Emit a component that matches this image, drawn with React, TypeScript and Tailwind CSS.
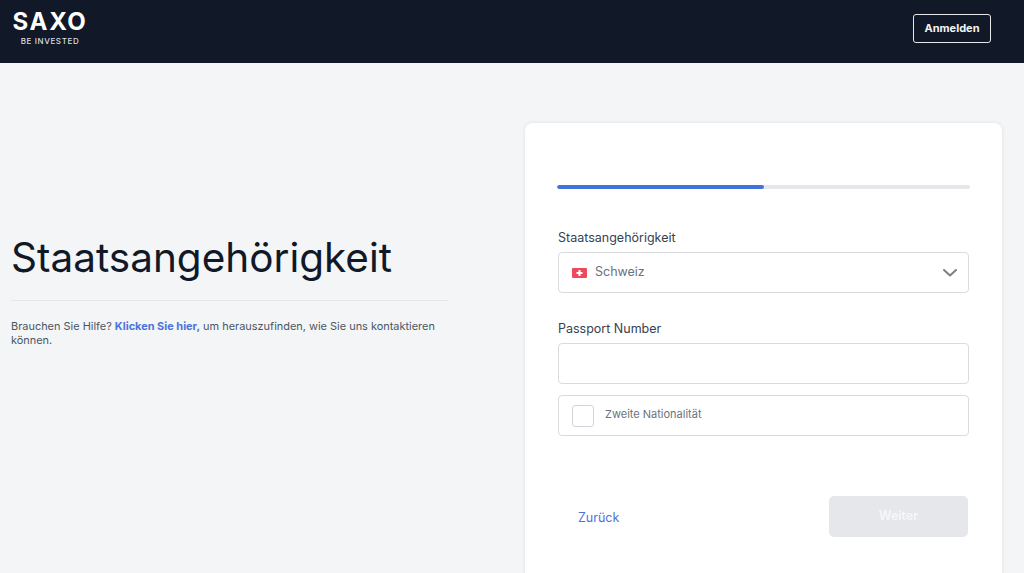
function SwissFlag() {
  return (
    <svg width="15" height="10" viewBox="0 0 15 10" className="shrink-0">
      <rect width="15" height="10" rx="1" fill="#f0475a" />
      <rect x="6.5" y="2" width="2" height="6" fill="#fff" />
      <rect x="4.5" y="4" width="6" height="2" fill="#fff" />
    </svg>
  );
}

export default function App() {
  return (
    <div className="h-[573px] overflow-hidden bg-[#f3f5f7] font-['Inter',sans-serif]">
      <header className="flex h-[63px] items-start justify-between bg-[#111827] pl-3 pr-[33px]">
        <div className="flex w-[76px] flex-col items-center pt-[8px] text-white">
          <span className="text-[24px] leading-[28px] font-bold tracking-[1.75px]">SAXO</span>
          <span className="mt-[1px] text-[8px] leading-[9px] font-medium tracking-[0.6px] text-[#d9dce2]">BE INVESTED</span>
        </div>
        <button className="mt-[14px] h-[29px] w-[78px] rounded-[3px] border border-[#e5e7eb] text-[11px] font-bold text-[#f3f4f6]">
          Anmelden
        </button>
      </header>

      <main className="flex pt-[60px] pl-[11px]">
        <section className="w-[437px] pt-[111px]">
          <h1 className="pb-[18px] text-[40.5px] leading-[48px] font-normal text-[#111827]">Staatsangehörigkeit</h1>
          <div className="border-t border-[#e5e7eb] pt-[19px] text-[10.95px] leading-[13.5px] text-[#4b5563]">
            Brauchen Sie Hilfe? <a className="font-bold text-[#4b74db]">Klicken Sie hier,</a> um herauszufinden, wie Sie uns kontaktieren können.
          </div>
        </section>

        <section className="ml-[77px] h-[480px] w-[477px] rounded-t-[8px] bg-white px-[33px] pt-[62px] shadow-[0_0_4px_rgba(0,0,0,0.09)]">
          <div className="-mx-px h-[4px] overflow-hidden rounded-full bg-[#e5e7eb]">
            <div className="h-full w-1/2 rounded-full bg-[#4173d9]" />
          </div>

          <label className="mt-[40px] block text-[12.5px] leading-[18px] text-[#374151]">Staatsangehörigkeit</label>
          <div className="mt-[5px] flex h-[41px] items-center rounded-[4px] border border-[#d9dbdf] pr-[11px] pl-[13px]">
            <SwissFlag />
            <span className="ml-[8px] text-[12.5px] text-[#6b7280]">Schweiz</span>
            <svg width="14" height="8" viewBox="0 0 14 8" fill="none" className="ml-auto">
              <path d="M1 1l6 5.5L13 1" stroke="#7b7f86" strokeWidth="2" strokeLinecap="round" strokeLinejoin="round" />
            </svg>
          </div>

          <label className="mt-[27px] block text-[12.5px] leading-[18px] text-[#374151]">Passport Number</label>
          <input className="mt-[5px] block h-[41px] w-full rounded-[4px] border border-[#d9dbdf] bg-white" />

          <div className="mt-[11px] flex h-[41px] items-center rounded-[4px] border border-[#d9dbdf] pl-[13px]">
            <span className="h-[22px] w-[22px] rounded-[3px] border border-[#d1d5db]" />
            <span className="ml-[11px] -translate-y-[1px] text-[11px] text-[#6b7280]">Zweite Nationalität</span>
          </div>

          <div className="mt-[60px] flex items-center justify-between pr-[1px] pl-[20px]">
            <a className="mt-[3px] text-[12.5px] text-[#4b74db]">Zurück</a>
            <button className="h-[41px] w-[139px] rounded-[5px] bg-[#e5e7eb] text-[12.5px] font-semibold text-[#f6f7f9]">Weiter</button>
          </div>
        </section>
      </main>
    </div>
  );
}
